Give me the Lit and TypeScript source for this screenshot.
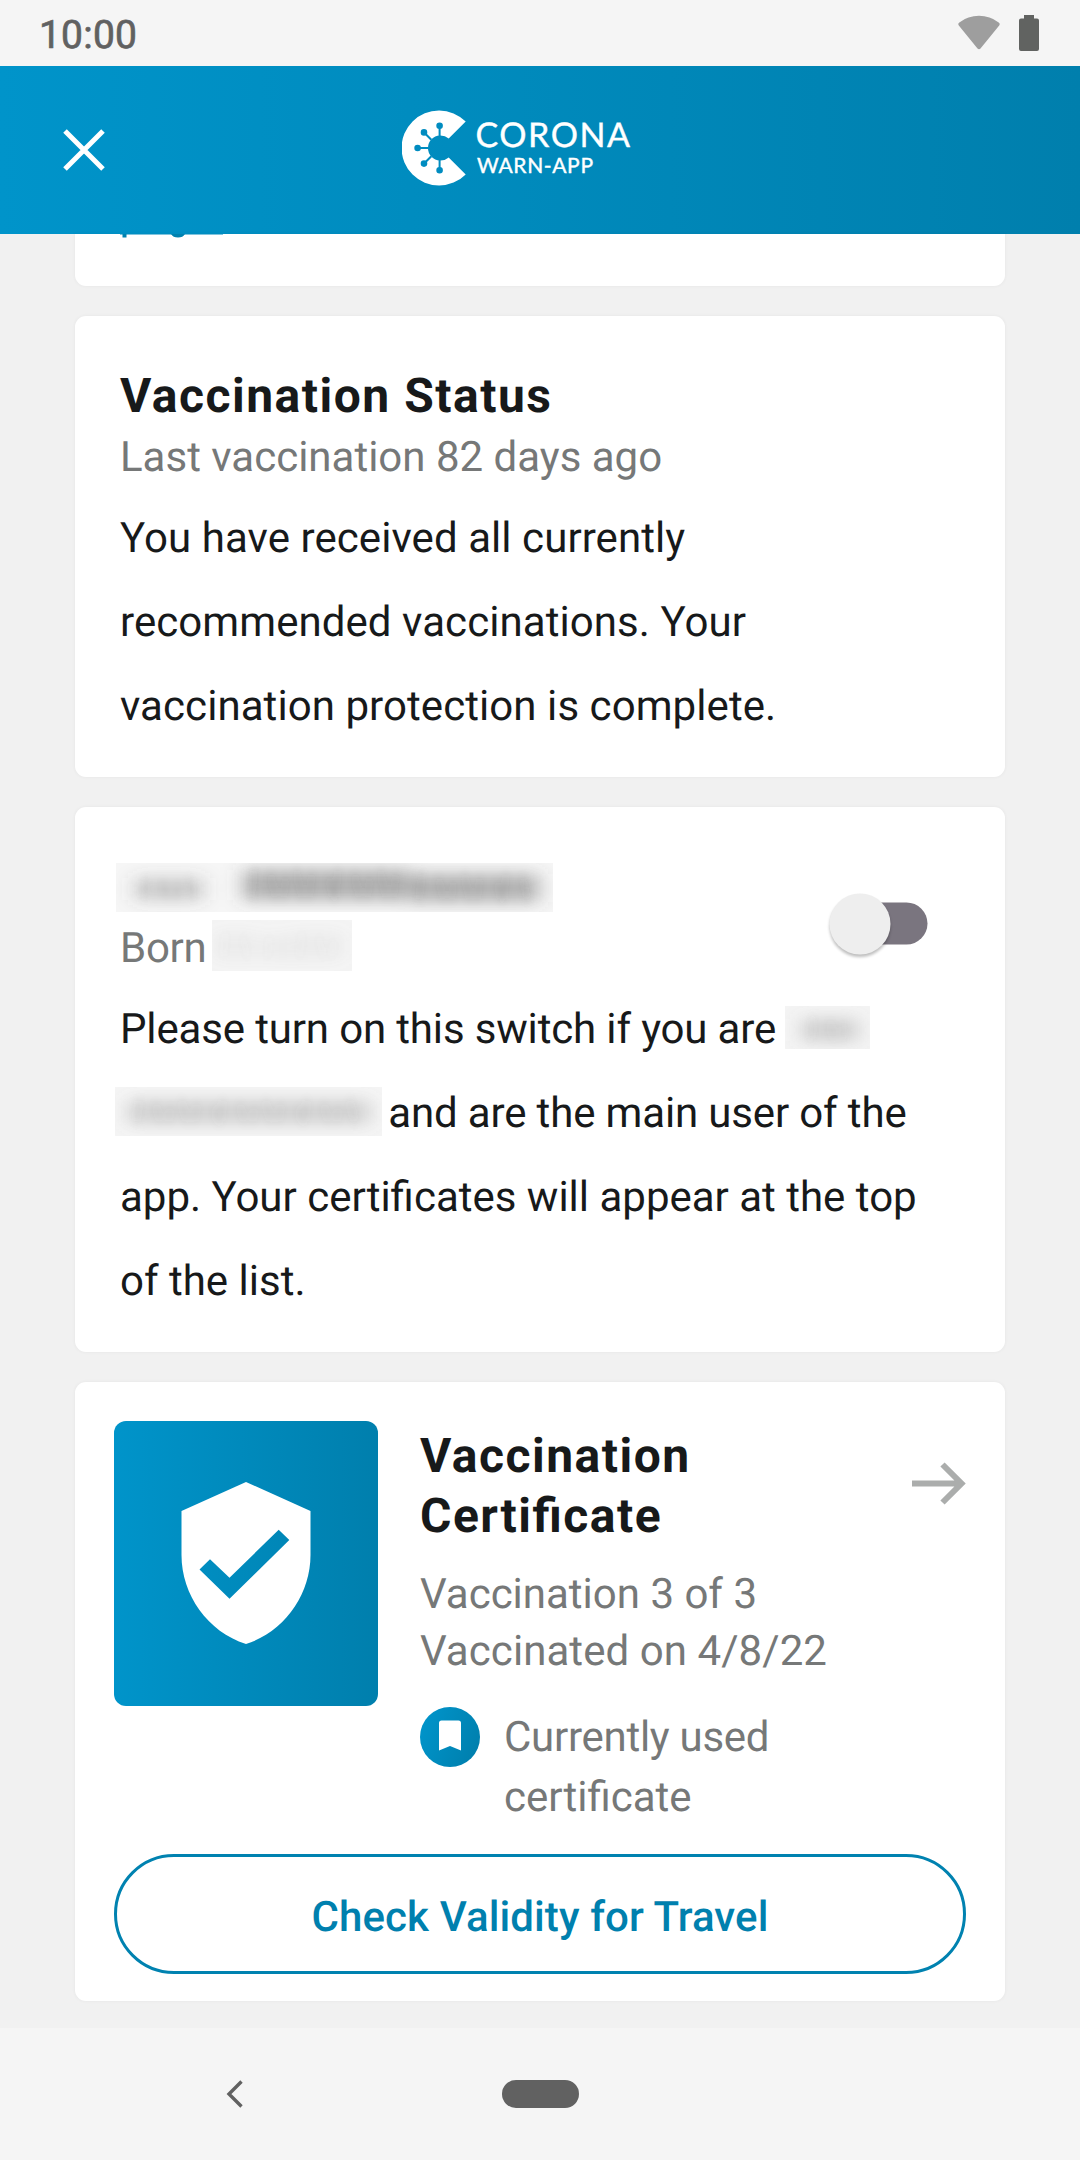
import { LitElement, html, css, svg } from "lit";
import { customElement, property } from "lit/decorators.js";

/** A masked piece of personal data: soft strokes on a pale strip. */
@customElement("masked-text")
class MaskedText extends LitElement {
  @property({ type: Number }) w = 100;
  @property({ type: Number }) h = 49;
  @property() tone = "#777";
  @property() base = "#f3f3f3";
  @property({ type: Number }) strength = 0.4;
  /** Words as "start,end,top,bottom,weight" groups, separated by spaces. */
  @property() words = "";

  static styles = css`
    :host { display: inline-block; line-height: 0; }
    svg { display: block; overflow: hidden; }
  `;

  render() {
    const words = this.words.split(" ").map((v) => v.split(",").map(Number));
    return html`<svg width=${this.w} height=${this.h} viewBox="0 0 ${this.w} ${this.h}" aria-hidden="true">
      <defs>
        <filter id="wide" x="-40%" y="-80%" width="180%" height="260%"><feGaussianBlur stdDeviation="10 8"></feGaussianBlur></filter>
        <filter id="fine" x="-20%" y="-60%" width="140%" height="220%"><feGaussianBlur stdDeviation="3.4 6"></feGaussianBlur></filter>
      </defs>
      <rect width=${this.w} height=${this.h} fill=${this.base}></rect>
      <g filter="url(#wide)" fill=${this.tone}>
        ${words.map(([a, b, t, u, k]) => svg`<rect x=${a - 5} y=${t - 1} width=${b - a + 10} height=${u - t + 4} opacity=${this.strength * k * 1.15}></rect>`)}
      </g>
      <g filter="url(#fine)" stroke=${this.tone} stroke-width="4">
        ${words.map(([a, b, t, u, k]) => {
          const n = Math.max(1, Math.floor((b - a) / 14));
          return Array.from({ length: n }, (_, i) => {
            const x = a + 6 + i * 14 + (i % 3) * 2;
            return svg`<path d="M${x} ${t + (i % 3) * 4}L${x + (i % 2 ? 6 : -3)} ${u}" opacity=${this.strength * k * 0.28}></path>`;
          });
        })}
      </g>
    </svg>`;
  }
}

@customElement("app-root")
class AppRoot extends LitElement {
  static styles = css`
    :host {
      display: flex;
      flex-direction: column;
      width: 1080px;
      height: 2160px;
      overflow: hidden;
      background: #f1f1f1;
      color: #17191a;
      font-family: Roboto, "Liberation Sans", sans-serif;
      font-size: 42px;
      text-rendering: geometricPrecision;
      font-feature-settings: "liga" 1;
    }
    * { box-sizing: border-box; }
    svg { display: block; flex: none; }
    h2, p { margin: 0; }
    .snug { letter-spacing: -0.15px; }
    .snugger { letter-spacing: -0.27px; }
    .loose { letter-spacing: 0.07px; }

    .status {
      flex: none;
      height: 66px;
      padding: 0 41px 0 39px;
      display: flex;
      justify-content: space-between;
      background: #f5f5f5;
      color: #616161;
      font-size: 39px;
      letter-spacing: 0.2px;
      -webkit-text-stroke: 0.7px #616161;
      line-height: 70px;
    }
    .status-icons { display: flex; gap: 19px; padding-top: 15px; }

    .header {
      flex: none;
      height: 168px;
      display: grid;
      grid-template-columns: 1fr 230px 1fr;
      align-items: center;
      padding-left: 63px;
      padding-right: 109px;
      background: linear-gradient(90deg, #0094ca, #007fad);
    }
    .logo { margin-top: -5px; }
    .logo text { font-family: Lato, sans-serif; fill: #fff; }
    .word-top { font-size: 34px; }
    .word-bottom { font-size: 21px; }

    main { flex: 1; display: flex; flex-direction: column; gap: 30px; padding: 0 75px; }
    .card {
      flex: none;
      background: #fff;
      border-radius: 11px;
      box-shadow: 0 0 3px 1px rgba(0, 0, 0, 0.03);
    }
    .card.cut { height: 52px; padding-left: 44px; border-radius: 0 0 11px 11px; }
    .card.info { padding: 50px 45px 30px; height: 461px; }
    .card.info.owner { height: 545px; }
    .title { font-size: 48px; line-height: 60px; font-weight: 700; letter-spacing: 1.5px; }
    .sub { color: #767878; line-height: 49px; padding-top: 7px; white-space: nowrap; }
    .body { line-height: 84px; padding-top: 15px; white-space: nowrap; }

    .person { display: flex; justify-content: space-between; height: 116px; }
    .name { display: flex; height: 60px; padding-top: 6px; margin-left: -4px; }
    .born { display: flex; gap: 6px; height: 56px; }
    .born masked-text { margin-top: -4px; }
    .switch { margin: 27px 29px 0 0; }
    .first { vertical-align: -6px; margin-left: -1px; }
    .last { vertical-align: -9px; margin: 0 -4px 0 -5px; }

    .cert { padding: 39px 39px 27px; display: flex; flex-direction: column; gap: 26px; height: 619px; }
    .cert-top { display: grid; grid-template-columns: 264px 1fr 54px; column-gap: 42px; height: 407px; }
    .badge {
      height: 285px;
      border-radius: 12px;
      background: linear-gradient(90deg, #0094ca, #007fad);
      display: flex;
      justify-content: center;
      padding-top: 60px;
    }
    .text { padding-top: 5px; }
    .details { color: #767878; line-height: 57px; padding-top: 20px; white-space: nowrap; }
    .used { color: #767878; line-height: 60px; display: flex; gap: 24px; padding-top: 27px; }
    .used div { padding-top: 1px; }
    .arrow { margin-top: 41px; }
    .travel {
      height: 120px;
      border: 3px solid #0082b0;
      border-radius: 60px;
      background: none;
      color: #0080ae;
      font: 500 42px/118px Roboto, "Liberation Sans", sans-serif;
      text-rendering: geometricPrecision;
      letter-spacing: 0.1px;
      padding: 2px 0 0;
    }

    .nav {
      flex: none;
      height: 132px;
      display: grid;
      grid-template-columns: 470px 140px 470px;
      align-items: center;
      background: #f5f5f5;
    }
    .back { justify-self: center; }
    .home { width: 77px; height: 28px; border-radius: 14px; background: #616161; justify-self: center; }
  `;

  render() {
    return html`
      <div class="status">
        <span>10:00</span>
        <div class="status-icons">
          <svg width="42" height="36" viewBox="0 0 42 36"><path d="M.8 10.4Q-.4 8.6 1.3 7.4Q10 .8 21 .8T40.700 7.400Q42.400 8.600 41.200 10.400L22.500 33.600Q21 35 19.500 33.600Z" fill="#9e9e9e"></path></svg>
          <svg width="20" height="36" viewBox="0 0 20 36"><path d="M5 0H15V3.500H18Q20 3.500 20 5.500V34Q20 36 18 36H2Q0 36 0 34V5.500Q0 3.500 2 3.500H5Z" fill="#616361"></path></svg>
        </div>
      </div>

      <div class="header">
        <svg width="42" height="42" viewBox="0 0 42 42"><path d="M2 2L40 40M40 2L2 40" stroke="#fff" stroke-width="5"></path></svg>
        <svg class="logo" width="230" height="76" viewBox="0 0 230 76">
          <path d="M63.700 11.600A37.500 37.500 0 1 0 63.700 64.400L46.700 47.400A12.500 12.500 0 1 1 46.700 28.600Z" fill="#fff"></path>
          <g stroke="#008cc0" stroke-width="2" fill="#008cc0">
            <path d="M37.600 26V16M37.600 50V60M26 38H16M29.300 29.700L22.300 22.700M29.300 46.300L22.300 53.300" fill="none"></path>
            <circle cx="37.600" cy="15.800" r="2.300"></circle><circle cx="37.600" cy="60.200" r="2.300"></circle>
            <circle cx="15.600" cy="38" r="2.300"></circle>
            <circle cx="22" cy="22.400" r="2.300"></circle><circle cx="22" cy="53.600" r="2.300"></circle>
          </g>
          <text class="word-top" x="73.500" y="36.800" textLength="154.500" stroke="#fff" stroke-width=".4">CORONA</text>
          <text class="word-bottom" x="75" y="62.500" textLength="116" stroke="#fff" stroke-width=".4">WARN-APP</text>
        </svg>
      </div>

      <main>
        <section class="card cut">
          <svg width="106" height="6" viewBox="0 0 106 6">
            <path d="M1 0H104V1H1Z" fill="#7fc4de"></path>
            <path d="M3.500 0H7.500V3.500H3.500ZM52 0H66Q64 3.600 59 3.600T52 0Z" fill="#0082b0"></path>
          </svg>
        </section>

        <section class="card info">
          <h2 class="title">Vaccination Status</h2>
          <p class="sub">Last vaccination 82 days ago</p>
          <p class="body loose">You have received all currently<br />recommended vaccinations. Your<br />vaccination protection is complete.</p>
        </section>

        <section class="card info owner">
          <div class="person">
            <div>
              <div class="name">
                <masked-text w="437" h="49" tone="#555" base="#f6f6f6" strength="0.4" words="24,82,16,34,.6 132,290,8,34,.95 300,418,12,36,.9"></masked-text>
              </div>
              <p class="sub born snugger">Born<masked-text w="140" h="51" tone="#999" base="#f4f4f4" strength="0.11" words="8,38,14,36,.8 52,76,18,36,.8 84,126,14,36,.8"></masked-text></p>
            </div>
            <svg class="switch" width="110" height="80" viewBox="0 0 110 80">
              <defs><filter id="soft" x="-30%" y="-30%" width="160%" height="160%"><feGaussianBlur stdDeviation="1.800"></feGaussianBlur></filter></defs>
              <rect x="30" y="18.500" width="76.500" height="42" rx="21" fill="#7a757f"></rect>
              <circle cx="39" cy="42.500" r="30.500" fill="#000" opacity=".26" filter="url(#soft)"></circle>
              <circle cx="39" cy="40" r="30.500" fill="#eee"></circle>
            </svg>
          </div>
          <p class="body"><span class="snug">Please turn on this switch if you are <masked-text class="first" w="85" h="43" tone="#777" base="#f4f4f4" strength="0.26" words="22,68,14,32,1"></masked-text></span><br /><masked-text class="last" w="267" h="49" tone="#777" base="#f5f5f5" strength="0.25" words="18,250,14,34,1"></masked-text><span class="snug"> and are the main user of the</span><br />app. Your certificates will appear at the top<br />of the list.</p>
        </section>

        <section class="card cert">
          <div class="cert-top">
            <div class="badge">
              <svg width="130" height="164" viewBox="0 0 130 164">
                <path fill-rule="evenodd" fill="#fff" d="M65 1L129.500 30V74C129.500 114 103 151 65 163C27 151 .5 114 .5 74V30ZM18.500 88.500L48.500 117.800L108.300 59L97.700 48.700L48.500 96.800L29 78.200Z"></path>
              </svg>
            </div>
            <div class="text">
              <h2 class="title">Vaccination<br />Certificate</h2>
              <p class="details">Vaccination 3 of 3<br /><span class="loose">Vaccinated on 4/8/22</span></p>
              <div class="used">
                <svg width="60" height="60" viewBox="0 0 60 60">
                  <defs><linearGradient id="g" x1="0" x2="1" y1=".3" y2=".7"><stop stop-color="#0094ca"></stop><stop offset="1" stop-color="#007fad"></stop></linearGradient></defs>
                  <circle cx="30" cy="30" r="30" fill="url(#g)"></circle>
                  <path d="M21.500 13.500H38.500Q41 13.500 41 16V43.500L30 39L19 43.500V16Q19 13.500 21.500 13.500Z" fill="#fff"></path>
                </svg>
                <div><span class="snugger">Currently used</span><br />certificate</div>
              </div>
            </div>
            <svg class="arrow" width="54" height="44" viewBox="0 0 54 44"><path d="M0 21.500H49M30.500 2.500L49.500 21.500L30.500 40.500" fill="none" stroke="#abadac" stroke-width="6"></path></svg>
          </div>
          <button class="travel">Check Validity for Travel</button>
        </section>
      </main>

      <div class="nav">
        <svg class="back" width="18" height="28" viewBox="0 0 18 28"><path d="M15.500 1.500L3 14L15.500 26.500" fill="none" stroke="#616161" stroke-width="3.400"></path></svg>
        <div class="home"></div>
      </div>
    `;
  }
}
